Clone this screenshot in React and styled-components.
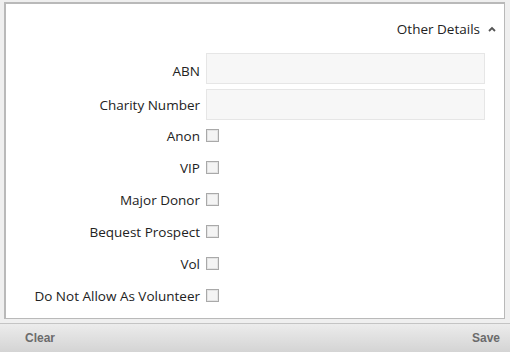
import styled, { createGlobalStyle } from "styled-components";

const Global = createGlobalStyle`
  html, body {
    margin: 0;
    padding: 0;
    background: #efefef;
  }
  body {
    font-family: "Open Sans", "Noto Sans", sans-serif;
  }
`;

const Page = styled.div`
  width: 510px;
  height: 352px;
  display: flex;
  flex-direction: column;
  background: #efefef;
`;

const Panel = styled.div`
  margin: 2px 5px 0 4px;
  height: 317px;
  box-sizing: border-box;
  background: #fff;
  border: 1px solid #b9b9b9;
  border-top-width: 2px;
  border-left-width: 2px;
  display: flex;
  flex-direction: column;
`;

const SectionHead = styled.div`
  display: flex;
  justify-content: flex-end;
  align-items: center;
  gap: 8px;
  padding: 15px 8px 0 0;
  height: 20px;
  font-size: 13.5px;
  color: #222;
`;

const Chevron = styled.svg`
  width: 8px;
  height: 6px;
`;

const Form = styled.div`
  display: grid;
  grid-template-columns: 194px 279px;
  column-gap: 6px;
  align-items: center;
  margin-top: 14px;
`;

const Label = styled.label`
  text-align: right;
  font-size: 13.5px;
  color: #222;
  white-space: nowrap;
`;

const Input = styled.div`
  box-sizing: border-box;
  height: 31px;
  background: #f7f7f7;
  border: 1px solid #e6e6e6;
  margin-bottom: ${(p) => p.gap}px;
`;

const Check = styled.span`
  display: block;
  box-sizing: border-box;
  width: 13px;
  height: 13px;
  border: 1px solid #a9a9a9;
  box-shadow: inset 0 0 0 1px #e4e4e4;
  background: #f4f4f4;
  margin: 9px 0 10px;
`;

const Footer = styled.div`
  margin-top: 4px;
  flex: 1;
  border-top: 1px solid #c4c4c4;
  background: linear-gradient(#ececec, #d4d4d4);
  display: flex;
  justify-content: space-between;
  align-items: center;
  padding: 0 10px 0 25px;
  font-family: "Liberation Sans", Arial, sans-serif;
  font-weight: bold;
  font-size: 12px;
  color: #6b6b6b;
`;

const checks = [
  "Anon",
  "VIP",
  "Major Donor",
  "Bequest Prospect",
  "Vol",
  "Do Not Allow As Volunteer",
];

export default function App() {
  return (
    <Page>
      <Global />
      <Panel>
        <SectionHead>
          Other Details
          <Chevron viewBox="0 0 8 6">
            <path d="M1 5 L4 2 L7 5" fill="none" stroke="#555" strokeWidth="1.8" />
          </Chevron>
        </SectionHead>
        <Form>
          <Label>ABN</Label>
          <Input gap={5} />
          <Label>Charity Number</Label>
          <Input gap={0} />
          {checks.map((c) => (
            <>
              <Label key={c}>{c}</Label>
              <Check key={c + "-box"} />
            </>
          ))}
        </Form>
      </Panel>
      <Footer>
        <span>Clear</span>
        <span>Save</span>
      </Footer>
    </Page>
  );
}
